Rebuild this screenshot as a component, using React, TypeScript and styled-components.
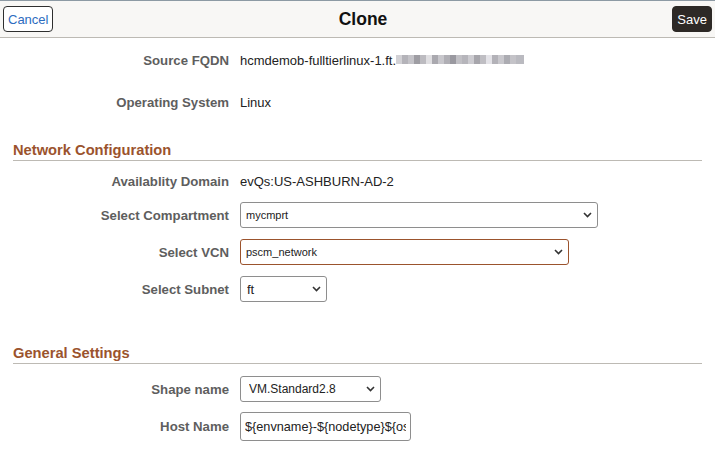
import React from "react";
import styled, { createGlobalStyle } from "styled-components";

const Global = createGlobalStyle`
  html, body { margin: 0; padding: 0; background: #ffffff; }
  body { font-family: "Liberation Sans", Arial, sans-serif; color: #333; }
  * { box-sizing: border-box; }
`;

const Page = styled.div`
  width: 715px;
  height: 455px;
  overflow: hidden;
  background: #fff;
`;

const Header = styled.header`
  display: grid;
  grid-template-columns: 1fr auto 1fr;
  align-items: center;
  height: 38px;
  padding: 0 3px;
  background: #f8f7f5;
  border-top: 1px solid #8d9aa4;
  border-bottom: 1px solid #bdbab4;
`;

const Title = styled.h1`
  margin: 0;
  font-size: 17.5px;
  font-weight: bold;
  color: #111;
  padding-left: 11px;
`;

const HeaderButton = styled.button<{ $primary?: boolean }>`
  justify-self: ${(p) => (p.$primary ? "end" : "start")};
  height: 26px;
  padding: 0 ${(p) => (p.$primary ? "4px" : "4px")};
  font-family: inherit;
  font-size: 13px;
  border-radius: 4px;
  cursor: pointer;
  color: ${(p) => (p.$primary ? "#fff" : "#2d6cc0")};
  background: ${(p) => (p.$primary ? "#2d2926" : "#fff")};
  border: 1px solid ${(p) => (p.$primary ? "#2d2926" : "#2f2f2f")};
`;

const Body = styled.main`
  display: flex;
  flex-direction: column;
`;

const Row = styled.div<{ $top: number; $h?: number }>`
  display: grid;
  grid-template-columns: 229px 1fr;
  column-gap: 11px;
  align-items: center;
  margin-top: ${(p) => p.$top}px;
  min-height: ${(p) => p.$h ?? 26}px;
`;

const Label = styled.label`
  text-align: right;
  font-size: 13.2px;
  font-weight: bold;
  color: #5e5e5e;
  white-space: nowrap;
`;

const Value = styled.span`
  font-size: 13px;
  color: #222;
  white-space: nowrap;
  display: flex;
  align-items: center;
`;

const Masked = styled.span`
  display: inline-block;
  width: 128px;
  height: 9px;
  margin-top: -2px;
  background:
    linear-gradient(90deg,
      #d2d1d5 0 6px, #b4b3b9 6px 12px, #c4c3c8 12px 18px, #9e9da3 18px 24px,
      #bcbbc0 24px 30px, #e0dfe2 30px 36px, #aaa9af 36px 42px, #c8c7cc 42px 48px,
      #b0afb5 48px 54px, #9a99a0 54px 60px, #c1c0c5 60px 66px, #b6b5bb 66px 72px,
      #cdccd1 72px 78px, #a7a6ac 78px 84px, #bfbec3 84px 90px, #e4e3e8 90px 96px,
      #b3b2b8 96px 102px, #c9c8cd 102px 108px, #acacb2 108px 114px, #c4c3c8 114px 120px,
      #babac0 120px 128px);
`;

const SectionHeader = styled.h2<{ $top: number }>`
  margin: ${(p) => p.$top}px 13px 0 13px;
  padding: 0 0 2px 0;
  font-size: 14.7px;
  line-height: 16px;
  font-weight: bold;
  color: #9b532d;
  border-bottom: 1px solid #bdbab4;
`;

const SelectWrap = styled.div<{ $w: number }>`
  position: relative;
  width: ${(p) => p.$w}px;
  height: 26px;
`;

const Select = styled.select<{ $accent?: boolean; $fs?: number; $pl?: number }>`
  appearance: none;
  -webkit-appearance: none;
  width: 100%;
  height: 100%;
  margin: 0;
  padding: 0 20px 0 ${(p) => p.$pl ?? 5}px;
  font-family: "Liberation Sans", Arial, sans-serif;
  font-size: ${(p) => p.$fs ?? 11}px;
  color: #222;
  background: #fff;
  border: 1px solid ${(p) => (p.$accent ? "#9b532d" : "#8e8e8e")};
  border-radius: 3px;
  outline: none;
`;

const Chevron = styled.svg`
  position: absolute;
  right: 6px;
  top: 50%;
  width: 9px;
  height: 6px;
  margin-top: -3px;
  pointer-events: none;
`;

const TextInput = styled.input`
  width: 171px;
  height: 29px;
  margin: 0;
  padding: 0 4px;
  font-family: "Liberation Sans", Arial, sans-serif;
  font-size: 12.7px;
  color: #222;
  background: #fff;
  border: 1px solid #8e8e8e;
  border-radius: 3px;
  outline: none;
`;

type DropdownProps = {
  width: number;
  value: string;
  accent?: boolean;
  fontSize?: number;
  padLeft?: number;
};

function Dropdown({ width, value, accent, fontSize, padLeft }: DropdownProps) {
  return (
    <SelectWrap $w={width}>
      <Select $accent={accent} $fs={fontSize} $pl={padLeft} defaultValue={value}>
        <option value={value}>{value}</option>
      </Select>
      <Chevron viewBox="0 0 9 6">
        <path d="M1 1 L4.5 4.5 L8 1" fill="none" stroke="#333" strokeWidth="1.6" />
      </Chevron>
    </SelectWrap>
  );
}

export default function App() {
  return (
    <Page>
      <Global />
      <Header>
        <HeaderButton>Cancel</HeaderButton>
        <Title>Clone</Title>
        <HeaderButton $primary>Save</HeaderButton>
      </Header>
      <Body>
        <Row $top={9}>
          <Label>Source FQDN</Label>
          <Value>
            hcmdemob-fulltierlinux-1.ft.
            <Masked />
          </Value>
        </Row>
        <Row $top={16}>
          <Label>Operating System</Label>
          <Value>Linux</Value>
        </Row>
        <SectionHeader $top={27}>Network Configuration</SectionHeader>
        <Row $top={10} $h={20}>
          <Label>Availablity Domain</Label>
          <Value>evQs:US-ASHBURN-AD-2</Value>
        </Row>
        <Row $top={11}>
          <Label>Select Compartment</Label>
          <Dropdown width={358} value="mycmprt" />
        </Row>
        <Row $top={11}>
          <Label>Select VCN</Label>
          <Dropdown width={329} value="pscm_network" accent />
        </Row>
        <Row $top={11}>
          <Label>Select Subnet</Label>
          <Dropdown width={87} value="ft" fontSize={13} padLeft={6} />
        </Row>
        <SectionHeader $top={43}>General Settings</SectionHeader>
        <Row $top={12}>
          <Label>Shape name</Label>
          <Dropdown width={141} value="VM.Standard2.8" fontSize={12} padLeft={8} />
        </Row>
        <Row $top={10} $h={29}>
          <Label>Host Name</Label>
          <TextInput readOnly defaultValue="${envname}-${nodetype}${ostype}" />
        </Row>
      </Body>
    </Page>
  );
}
